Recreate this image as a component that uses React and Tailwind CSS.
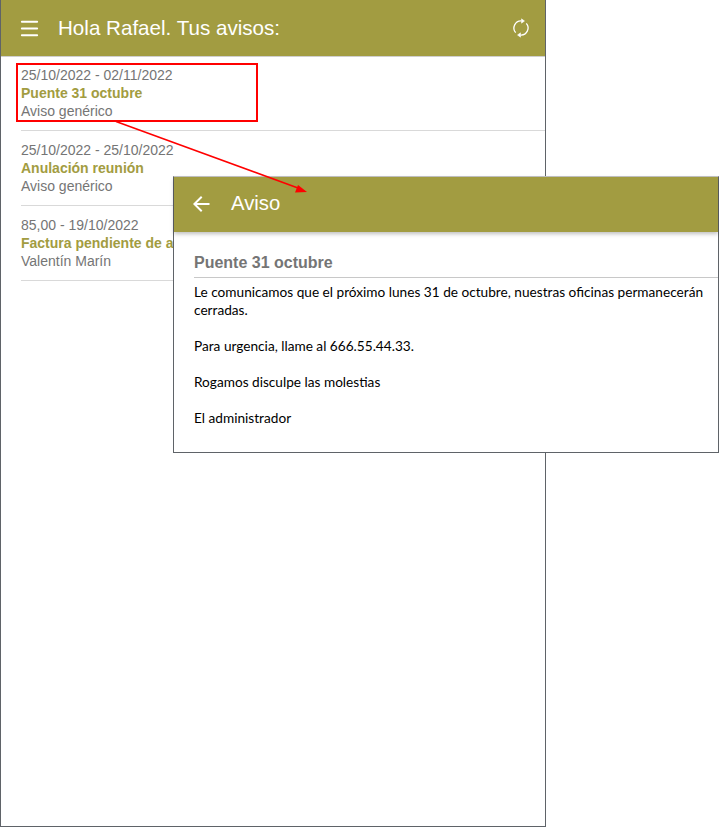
import { Menu } from 'lucide-react'

const avisos = [
  { fecha: '25/10/2022 - 02/11/2022', titulo: 'Puente 31 octubre', detalle: 'Aviso genérico' },
  { fecha: '25/10/2022 - 25/10/2022', titulo: 'Anulación reunión', detalle: 'Aviso genérico' },
  { fecha: '85,00 - 19/10/2022', titulo: 'Factura pendiente de abono', detalle: 'Valentín Marín' },
]

function AvisoRow({ aviso }) {
  return (
    <li className="ml-5 border-b border-[#d9d9d9] h-[75px] pt-[10px] text-[14px] leading-[18px] text-[#757575]">
      <div>{aviso.fecha}</div>
      <div className="font-bold text-[#a29c41]">{aviso.titulo}</div>
      <div>{aviso.detalle}</div>
    </li>
  )
}

function SyncIcon() {
  return (
    <svg className="mr-[14px]" width="20" height="20" viewBox="0 0 20 20" fill="none" stroke="white" strokeWidth="1.3">
      <path d="M4.7 14.6A7 7 0 0 1 10.5 3" />
      <path d="M15.3 5.4A7 7 0 0 1 9.5 17" />
      <path d="M10.5 0.8L13.5 3L10.5 5.2Z" fill="white" strokeWidth="0.5" />
      <path d="M9.5 14.8L6.5 17L9.5 19.2Z" fill="white" strokeWidth="0.5" />
    </svg>
  )
}

export default function App() {
  return (
    <div className="relative w-[719px] h-[829px] bg-white overflow-hidden font-['Liberation_Sans',sans-serif]">
      {/* pantalla de fondo */}
      <div className="w-[546px] h-[827px] border-l border-r border-b border-[#5f6368]">
        <header className="h-[57px] bg-[#a29c41] border-b border-[#cfcfcf] flex items-center text-white">
          <Menu className="ml-[17px] w-[23px] h-[23px]" strokeWidth={2} />
          <h1 className="ml-[17px] text-[20.6px] flex-1">Hola Rafael. Tus avisos:</h1>
          <SyncIcon />
        </header>
        <ul className="-mt-px">
          {avisos.map((a) => (
            <AvisoRow key={a.titulo} aviso={a} />
          ))}
        </ul>
      </div>

      {/* ventana de detalle */}
      <div className="absolute left-[173px] top-[176px] w-[546px] h-[277px] bg-white border-l border-r border-b border-t border-[#5f6368] border-t-[#c4c4c4]">
        <div className="h-[55px] pb-[2px] bg-[#a29c41] flex items-center text-white shadow-[0_2px_4px_rgba(0,0,0,0.25)]">
          <svg className="ml-[15px]" width="24" height="24" viewBox="0 0 24 24" fill="white">
            <path d="M20.5 11H7.83l5.59-5.59L12 4l-8 8 8 8 1.41-1.41L7.83 13H20.5v-2z" />
          </svg>
          <h2 className="ml-[18px] text-[20.3px]">Aviso</h2>
        </div>
        <div className="pl-5 pt-[21px]">
          <h3 className="font-bold text-[16px] leading-[20px] text-[#757575] border-b border-[#c8c8c8] pb-[4px]">Puente 31 octubre</h3>
          <div className="mt-[5px] font-['Lato',sans-serif] text-[13.65px] leading-[18px] text-black">
            <p>Le comunicamos que el próximo lunes 31 de octubre, nuestras oficinas permanecerán<br />cerradas.</p>
            <p className="mt-[18px]">Para urgencia, llame al 666.55.44.33.</p>
            <p className="mt-[18px]">Rogamos disculpe las molestias</p>
            <p className="mt-[18px]">El administrador</p>
          </div>
        </div>
      </div>

      {/* anotación roja */}
      <div className="absolute left-[16px] top-[63px] w-[242px] h-[59px] border-2 border-[#ff0000]" />
      <svg className="absolute left-0 top-0" width="719" height="829" fill="none">
        <line x1="116" y1="121.5" x2="298" y2="188" stroke="#ff0000" strokeWidth="1.5" />
        <polygon points="307,192 295,192.5 298,185" fill="#ff0000" />
      </svg>
    </div>
  )
}
